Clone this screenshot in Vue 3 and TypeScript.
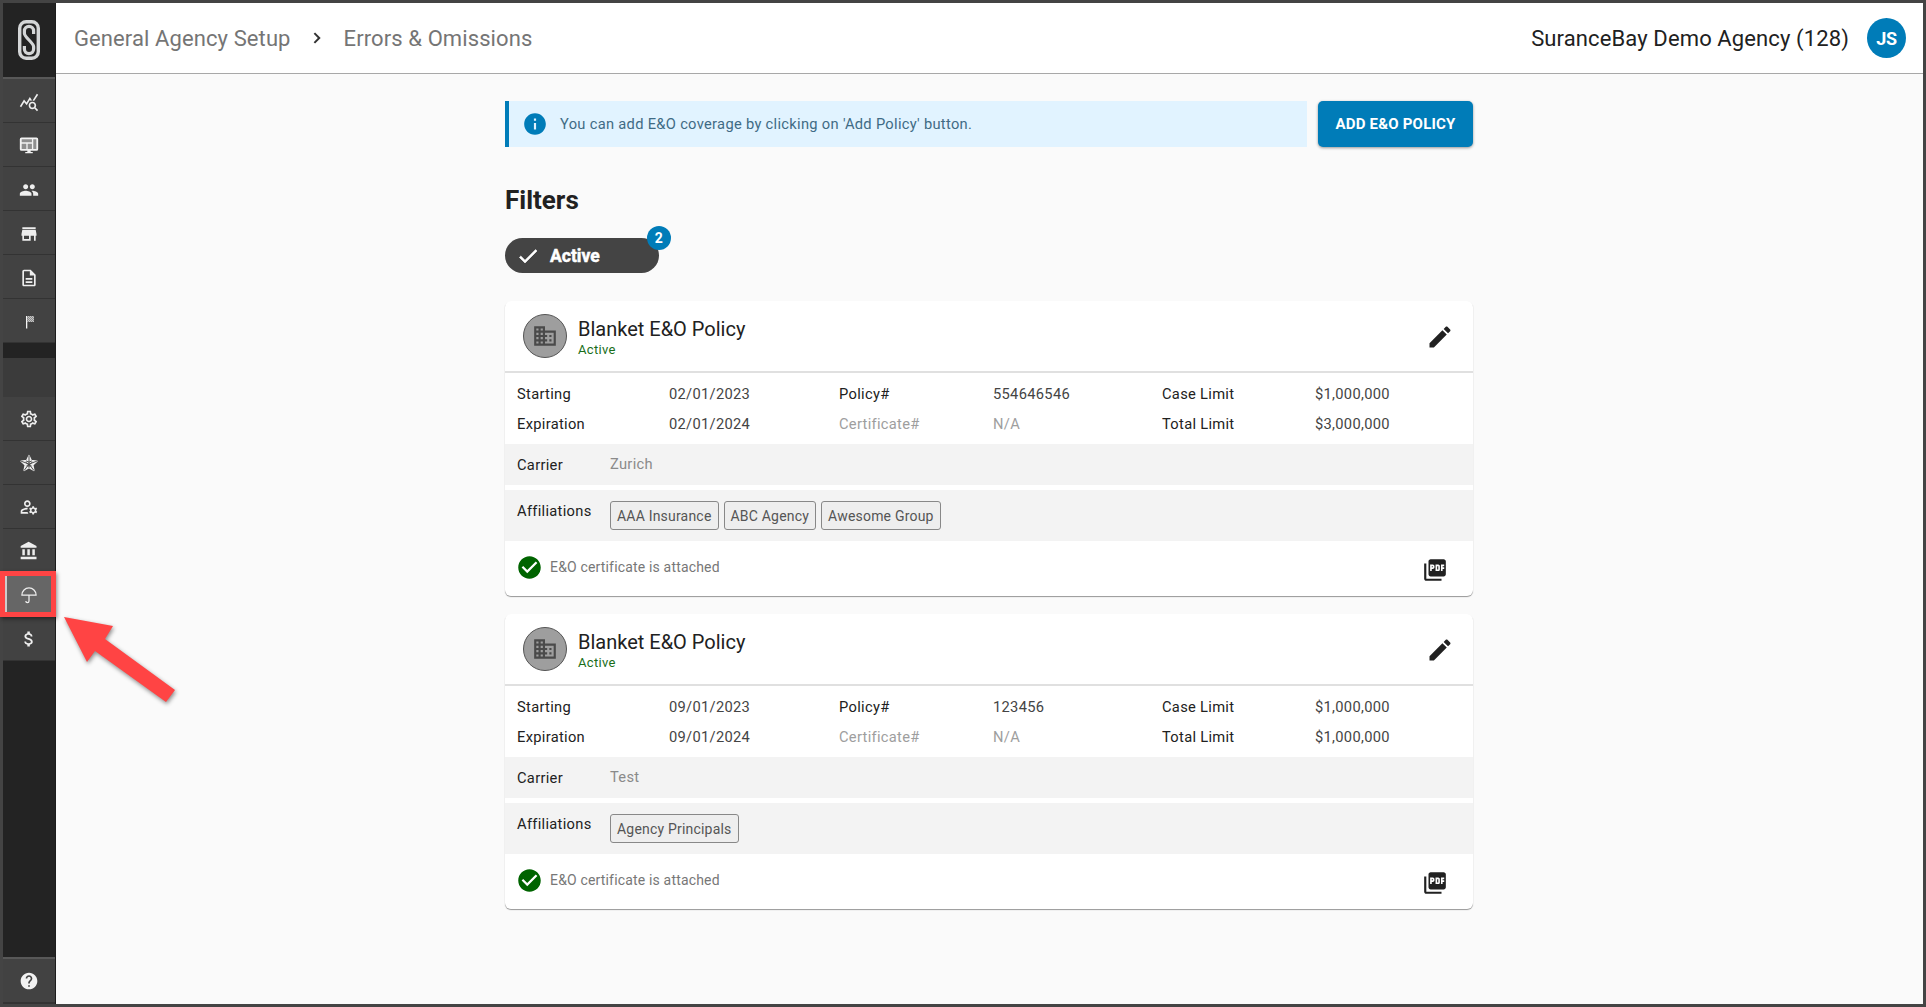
<template>
  <div class="frame">
    <aside class="sidebar">
      <div class="logo">
        <svg viewBox="0 0 22 40" width="22" height="40" fill="none" stroke="#d4d6d7">
          <rect x="1.700" y="1.700" width="18.600" height="36.600" rx="6.500" stroke-width="3.400" />
          <path stroke-width="3.200" d="M15.600 14V11a4.600 4.600 0 0 0-9.200 0v2.500c0 3.500 9.200 9.500 9.200 13V29a4.600 4.600 0 0 1-9.200 0v-3" />
        </svg>
      </div>
      <nav class="group">
        <a class="nav-item nudge">
          <svg viewBox="0 0 24 24" width="20" height="20" fill="#eee"><path :d="icons.stats" /></svg>
        </a>
        <a class="nav-item">
          <svg viewBox="0 0 24 24" width="20" height="20" fill="#f2f2f2">
            <rect x="2" y="4" width="20" height="14" fill="#8f8f8f" />
            <path :d="icons.monitor" />
          </svg>
        </a>
        <a class="nav-item nudge">
          <svg viewBox="0 0 24 24" width="20" height="20" fill="#eee"><path :d="icons.people" /></svg>
        </a>
        <a class="nav-item nudge">
          <svg viewBox="0 0 24 24" width="20" height="20" fill="#eee"><path :d="icons.store" /></svg>
        </a>
        <a class="nav-item nudge">
          <svg viewBox="0 0 24 24" width="20" height="20" fill="#eee"><path :d="icons.doc" /></svg>
        </a>
        <a class="nav-item">
          <svg viewBox="0 0 20 20" width="20" height="20">
            <defs>
              <pattern id="checker" width="2" height="2" patternUnits="userSpaceOnUse">
                <rect width="2" height="2" fill="#8a8a8a" />
                <rect width="1" height="1" fill="#c4c4c4" />
                <rect x="1" y="1" width="1" height="1" fill="#c4c4c4" />
              </pattern>
            </defs>
            <rect x="7" y="5" width="1.300" height="12.500" fill="#f5f5f5" />
            <rect x="8.300" y="5" width="6.700" height="6" fill="url(#checker)" />
          </svg>
        </a>
      </nav>
      <div class="gap"></div>
      <div class="blank"></div>
      <nav class="group">
        <a class="nav-item">
          <svg viewBox="0 0 24 24" width="20" height="20" fill="#eee"><path :d="icons.settings" /></svg>
        </a>
        <a class="nav-item">
          <svg viewBox="0 0 24 24" width="20" height="20" fill="#eee">
            <path d="M12 3l2.800 6 6.700.8-4.900 4.600 1.300 6.600-5.900-3.300L6.100 21l1.300-6.600L2.500 9.800 9.200 9z" stroke="#eee" stroke-width="1.600" stroke-linejoin="round" />
            <path d="M12 3v14.700M2.500 9.800l9.500 3.400 9.500-3.400M6.100 21l5.900-7.800 5.900 7.800M8 11l4 3.800 4-3.800M9 15.500h6M8.500 9.500l3.500 1.500 3.500-1.500" fill="none" stroke="#444" stroke-width="1.100" />
          </svg>
        </a>
        <a class="nav-item">
          <svg viewBox="0 0 24 24" width="20" height="20" fill="#eee"><path :d="icons.manage" /></svg>
        </a>
        <a class="nav-item">
          <svg viewBox="0 0 24 24" width="20" height="20" fill="#eee"><path :d="icons.bank" /></svg>
        </a>
        <a class="nav-item active">
          <svg viewBox="0 0 24 24" width="20" height="20" fill="none" stroke="#eee" stroke-width="1.500">
            <path d="M3.500 12a8.500 8.500 0 0 1 17 0z" />
            <path d="M12 12v7.200a1.900 1.900 0 0 1-3.800 0" />
          </svg>
        </a>
        <a class="nav-item">
          <svg viewBox="0 0 24 24" width="20" height="20" fill="#eee"><path :d="icons.money" /></svg>
        </a>
      </nav>
      <div class="spacer"></div>
      <a class="nav-item help">
        <svg viewBox="0 0 24 24" width="20" height="20" fill="#f2f2f2"><path :d="icons.help" /></svg>
      </a>
    </aside>

    <main class="main">
      <header class="topbar">
        <div class="crumbs">
          <span>General Agency Setup</span>
          <svg viewBox="0 0 24 24" width="20" height="20" fill="#333"><path d="M9.700 5.300 8 7l5 5-5 5 1.700 1.700 6.700-6.700z" /></svg>
          <span class="crumb-last">Errors &amp; Omissions</span>
        </div>
        <div class="agency">
          <span>SuranceBay Demo Agency (128)</span>
          <div class="avatar">JS</div>
        </div>
      </header>

      <section class="content">
        <div class="notice-row">
          <div class="notice">
            <svg viewBox="0 0 24 24" width="26" height="26" fill="#007cb8"><path :d="icons.info" /></svg>
            <span>You can add E&amp;O coverage by clicking on 'Add Policy' button.</span>
          </div>
          <button class="add-btn">ADD E&amp;O POLICY</button>
        </div>

        <h2 class="filters-title">Filters</h2>
        <div class="chip">
          <svg viewBox="0 0 24 24" width="24" height="24" fill="#fff" stroke="#fff" stroke-width=".6"><path :d="icons.check" /></svg>
          <span class="chip-text">Active</span>
          <b class="chip-badge">2</b>
        </div>

        <article v-for="(policy, i) in policies" :key="i" class="card">
          <div class="card-head">
            <div class="round">
              <svg viewBox="0 0 24 24" width="26" height="26" fill="#4a4a4a"><path :d="icons.domain" /></svg>
            </div>
            <div class="card-title">
              <div class="name">Blanket E&amp;O Policy</div>
              <div class="status">Active</div>
            </div>
            <svg class="edit" viewBox="0 0 24 24" width="28" height="28" fill="#212121"><path :d="icons.edit" /></svg>
          </div>

          <div class="details">
            <span class="lbl">Starting</span><span class="val">{{ policy.start }}</span>
            <span class="lbl">Policy#</span><span class="val">{{ policy.number }}</span>
            <span class="lbl">Case Limit</span><span class="val">{{ policy.caseLimit }}</span>
            <span class="lbl">Expiration</span><span class="val">{{ policy.end }}</span>
            <span class="muted">Certificate#</span><span class="muted">N/A</span>
            <span class="lbl">Total Limit</span><span class="val">{{ policy.totalLimit }}</span>
          </div>

          <div class="band carrier">
            <span class="lbl band-lbl">Carrier</span>
            <span class="carrier-name">{{ policy.carrier }}</span>
          </div>

          <div class="band affil">
            <span class="lbl band-lbl affil-lbl">Affiliations</span>
            <div class="tags">
              <span v-for="t in policy.affiliations" :key="t" class="tag">{{ t }}</span>
            </div>
          </div>

          <div class="attach">
            <svg viewBox="0 0 24 24" width="27" height="27" fill="#006400"><path :d="icons.checkCircle" /></svg>
            <span>E&amp;O certificate is attached</span>
            <svg class="pdf" viewBox="0 0 24 24" width="26" height="26" fill="#212121"><path :d="icons.pdf" /></svg>
          </div>
        </article>
      </section>
    </main>

    <!-- screenshot annotation -->
    <div class="callout"></div>
    <svg class="arrow" viewBox="0 0 130 100" width="130" height="100">
      <polygon points="4,7 53,16 45,29 115,80 106,92 35,41 27,52" fill="#ff4444" />
    </svg>
  </div>
</template>

<script setup lang="ts">
const icons = {
  stats: 'M19.88 18.47c.44-.7.7-1.51.7-2.39 0-2.49-2.01-4.5-4.5-4.5s-4.5 2.01-4.5 4.5 2.01 4.5 4.49 4.5c.88 0 1.7-.26 2.39-.7L21.58 23 23 21.58l-3.12-3.11zm-3.8.11c-1.38 0-2.5-1.12-2.5-2.5s1.12-2.5 2.5-2.5 2.5 1.12 2.5 2.5-1.12 2.5-2.5 2.5zm-.36-8.5c-.74.02-1.45.18-2.1.45l-.55-.83-3.8 6.18-3.01-3.52-3.63 5.81L1 17l5-8 3 3.5L13 6l2.72 4.080zm2.59.5c-.64-.28-1.33-.45-2.05-.49L21.38 2 23 3.180l-4.69 7.400z',
  monitor: 'M21 3H3a2 2 0 0 0-2 2v12a2 2 0 0 0 2 2h7v1.500H7.500V22h9v-1.500H14V19h7a2 2 0 0 0 2-2V5a2 2 0 0 0-2-2zM3.200 5.200h12.300v3.600H3.200zm0 5.200h5.600v6.300H3.200zm7.200 0h5.100v6.300h-5.100zm6.700-5.200h3.700v11.500h-3.700z',
  people: 'M16 11c1.660 0 2.990-1.340 2.990-3S17.660 5 16 5c-1.660 0-3 1.340-3 3s1.340 3 3 3zm-8 0c1.660 0 2.990-1.340 2.990-3S9.660 5 8 5C6.340 5 5 6.340 5 8s1.340 3 3 3zm0 2c-2.330 0-7 1.170-7 3.500V19h14v-2.500c0-2.330-4.670-3.500-7-3.500zm8 0c-.29 0-.62.02-.97.05 1.160.84 1.970 1.970 1.970 3.450V19h6v-2.500c0-2.330-4.670-3.500-7-3.500z',
  store: 'M20 4H4v2h16V4zm1 10v-2l-1-5H4l-1 5v2h1v6h10v-6h4v6h2v-6h1zm-9 4H6v-4h6v4z',
  doc: 'M8 16h8v2H8zm0-4h8v2H8zm6-10H6c-1.100 0-2 .9-2 2v16c0 1.100.89 2 1.990 2H18c1.100 0 2-.9 2-2V8l-6-6zm4 18H6V4h7v5h5v11z',
  settings: 'M19.430 12.980c.04-.32.07-.64.07-.98 0-.34-.03-.66-.07-.98l2.110-1.650c.19-.15.24-.42.12-.64l-2-3.460c-.09-.16-.26-.25-.44-.25-.06 0-.12.01-.17.03l-2.490 1c-.52-.4-1.080-.73-1.690-.98l-.38-2.650C14.460 2.180 14.250 2 14 2h-4c-.25 0-.46.18-.49.42l-.38 2.650c-.61.25-1.170.59-1.690.98l-2.490-1c-.06-.02-.12-.03-.18-.03-.17 0-.34.09-.43.25l-2 3.460c-.13.22-.07.49.12.64l2.110 1.650c-.04.32-.07.65-.07.98 0 .33.03.66.07.98l-2.110 1.650c-.19.15-.24.42-.12.64l2 3.460c.09.16.26.25.44.25.06 0 .12-.01.17-.03l2.490-1c.52.4 1.080.73 1.690.98l.38 2.650c.03.24.24.42.49.42h4c.25 0 .46-.18.49-.42l.38-2.650c.61-.25 1.170-.59 1.690-.98l2.490 1c.06.02.12.03.18.03.17 0 .34-.09.43-.25l2-3.460c.12-.22.07-.49-.12-.64l-2.110-1.650zm-1.980-1.710c.04.31.05.52.05.73 0 .21-.02.43-.05.73l-.14 1.130.89.7 1.080.84-.7 1.210-1.270-.51-1.040-.42-.9.68c-.43.32-.84.56-1.250.73l-1.060.43-.16 1.130-.2 1.350h-1.400l-.19-1.350-.16-1.130-1.060-.43c-.43-.18-.83-.41-1.230-.71l-.91-.7-1.060.43-1.270.51-.7-1.210 1.080-.84.89-.7-.14-1.130c-.03-.31-.05-.54-.05-.74s.02-.43.05-.73l.14-1.130-.89-.7-1.080-.84.7-1.210 1.270.51 1.040.42.9-.68c.43-.32.84-.56 1.250-.73l1.060-.43.16-1.130.2-1.350h1.390l.19 1.350.16 1.130 1.060.43c.43.18.83.41 1.230.71l.91.7 1.060-.43 1.270-.51.7 1.210-1.070.85-.89.7.14 1.130zM12 8c-2.210 0-4 1.790-4 4s1.790 4 4 4 4-1.790 4-4-1.790-4-4-4zm0 6c-1.100 0-2-.9-2-2s.9-2 2-2 2 .9 2 2-.9 2-2 2z',
  manage: 'M4 18v-.65c0-.34.16-.66.41-.81C6.100 15.530 8.030 15 10 15c.03 0 .05 0 .08.01.1-.7.3-1.370.59-1.980-.22-.02-.44-.03-.67-.03-2.420 0-4.680.67-6.610 1.820-.88.52-1.390 1.500-1.390 2.530V20h9.260c-.42-.6-.75-1.280-.97-2H4zM10 12c2.210 0 4-1.790 4-4s-1.790-4-4-4-4 1.790-4 4 1.790 4 4 4zm0-6c1.100 0 2 .9 2 2s-.9 2-2 2-2-.9-2-2 .9-2 2-2zM20.750 16c0-.22-.03-.42-.06-.63l1.140-1.010-1-1.730-1.450.49c-.32-.27-.68-.48-1.080-.63L18 11h-2l-.3 1.490c-.4.15-.76.36-1.080.63l-1.450-.49-1 1.730 1.140 1.010c-.03.21-.06.41-.06.63s.03.42.06.63l-1.140 1.010 1 1.730 1.450-.49c.32.27.68.48 1.080.63L16 21h2l.3-1.490c.4-.15.76-.36 1.080-.63l1.450.49 1-1.730-1.140-1.010c.03-.21.06-.41.06-.63zM17 18c-1.100 0-2-.9-2-2s.9-2 2-2 2 .9 2 2-.9 2-2 2z',
  bank: 'M4 10v7h3v-7H4zm6 0v7h3v-7h-3zM2 22h19v-3H2v3zm14-12v7h3v-7h-3zm-4.500-9L2 6v2h19V6l-9.500-5z',
  money: 'M11.800 10.900c-2.270-.59-3-1.200-3-2.150 0-1.090 1.010-1.850 2.700-1.850 1.780 0 2.440.85 2.500 2.100h2.210c-.07-1.720-1.120-3.300-3.210-3.810V3h-3v2.160c-1.940.42-3.500 1.680-3.500 3.610 0 2.310 1.910 3.460 4.700 4.130 2.500.6 3 1.480 3 2.410 0 .69-.49 1.790-2.700 1.790-2.060 0-2.870-.92-2.980-2.100h-2.200c.12 2.190 1.760 3.420 3.680 3.830V21h3v-2.150c1.950-.37 3.500-1.500 3.500-3.550 0-2.840-2.430-3.810-4.700-4.400z',
  help: 'M12 2C6.480 2 2 6.480 2 12s4.480 10 10 10 10-4.480 10-10S17.520 2 12 2zm1 17h-2v-2h2v2zm2.070-7.750l-.9.92C13.450 12.900 13 13.500 13 15h-2v-.5c0-1.100.45-2.100 1.170-2.830l1.240-1.260c.37-.36.59-.86.59-1.410 0-1.100-.9-2-2-2s-2 .9-2 2H8c0-2.210 1.790-4 4-4s4 1.790 4 4c0 .88-.36 1.680-.93 2.250z',
  info: 'M12 2C6.480 2 2 6.480 2 12s4.480 10 10 10 10-4.480 10-10S17.520 2 12 2zm1 15h-2v-6h2v6zm0-8h-2V7h2v2z',
  check: 'M9 16.170L4.830 12l-1.420 1.410L9 19 21 7l-1.410-1.410z',
  domain: 'M12 7V3H2v18h20V7H12zM6 19H4v-2h2v2zm0-4H4v-2h2v2zm0-4H4V9h2v2zm0-4H4V5h2v2zm4 12H8v-2h2v2zm0-4H8v-2h2v2zm0-4H8V9h2v2zm0-4H8V5h2v2zm10 12h-8v-2h2v-2h-2v-2h2v-2h-2V9h8v10zm-2-8h-2v2h2v-2zm0 4h-2v2h2v-2z',
  edit: 'M3 17.250V21h3.750L17.810 9.940l-3.750-3.750L3 17.250zM20.710 7.040c.39-.39.39-1.020 0-1.410l-2.340-2.340c-.39-.39-1.020-.39-1.410 0l-1.830 1.830 3.750 3.750 1.830-1.830z',
  checkCircle: 'M12 2C6.480 2 2 6.480 2 12s4.480 10 10 10 10-4.480 10-10S17.520 2 12 2zm-2 15l-5-5 1.410-1.410L10 14.170l7.590-7.590L19 8l-9 9z',
  pdf: 'M20 2H8c-1.100 0-2 .9-2 2v12c0 1.100.9 2 2 2h12c1.100 0 2-.9 2-2V4c0-1.100-.9-2-2-2zm-8.500 7.500c0 .83-.67 1.500-1.500 1.500H9v2H7.500V7H10c.83 0 1.500.67 1.500 1.500v1zm5 2c0 .83-.67 1.500-1.500 1.500h-2.500V7H15c.83 0 1.500.67 1.500 1.500v3zm4-3H19v1h1.500V11H19v2h-1.500V7h3v1.500zM9 9.500h1v-1H9v1zM4 6H2v14c0 1.100.9 2 2 2h14v-2H4V6zm10 5.500h1v-3h-1v3z'
}

interface Policy {
  start: string
  end: string
  number: string
  caseLimit: string
  totalLimit: string
  carrier: string
  affiliations: string[]
}

const policies: Policy[] = [
  {
    start: '02/01/2023',
    end: '02/01/2024',
    number: '554646546',
    caseLimit: '$1,000,000',
    totalLimit: '$3,000,000',
    carrier: 'Zurich',
    affiliations: ['AAA Insurance', 'ABC Agency', 'Awesome Group']
  },
  {
    start: '09/01/2023',
    end: '09/01/2024',
    number: '123456',
    caseLimit: '$1,000,000',
    totalLimit: '$1,000,000',
    carrier: 'Test',
    affiliations: ['Agency Principals']
  }
]
</script>

<style>
html,
body {
  margin: 0;
  background: #444;
}
</style>

<style scoped>
.frame {
  position: relative;
  width: 1926px;
  height: 1007px;
  box-sizing: border-box;
  padding: 3px;
  background: #444;
  display: flex;
  overflow: hidden;
  font-family: Roboto, "Liberation Sans", sans-serif;
  letter-spacing: 0.3px;
}
.sidebar {
  width: 53px;
  flex: none;
  display: flex;
  flex-direction: column;
  background: #232323;
  border-right: 1px solid #1c1c1c;
  box-sizing: border-box;
}
.logo {
  height: 74px;
  flex: none;
  display: flex;
  align-items: center;
  justify-content: center;
  padding-right: 1px;
  box-sizing: border-box;
}
.group {
  border-top: 2px solid #585858;
  display: flex;
  flex-direction: column;
}
.gap {
  height: 15px;
  flex: none;
}
.blank {
  height: 39px;
  flex: none;
  background: #3b3b3b;
}
.blank + .group {
  border-top: 0;
}
.nav-item {
  height: 44px;
  flex: none;
  box-sizing: border-box;
  background: #424242;
  border-bottom: 1px solid #333;
  display: flex;
  align-items: center;
  justify-content: center;
}
.nudge {
  padding-top: 2px;
}
.nav-item.active {
  background: #666;
}
.spacer {
  flex: 1;
}
.help {
  height: 47px;
  border-top: 2px solid #585858;
  border-bottom: 2px solid #333;
}
.main {
  flex: 1;
  min-width: 0;
  background: #fafafa;
  display: flex;
  flex-direction: column;
}
.topbar {
  height: 71px;
  flex: none;
  box-sizing: border-box;
  background: #fff;
  border-bottom: 1px solid #a8a8a8;
  padding: 0 17px 0 18px;
  display: flex;
  align-items: center;
  justify-content: space-between;
}
.crumbs {
  display: flex;
  align-items: center;
  gap: 16px;
  font-size: 22px;
  color: #757575;
  letter-spacing: 0.1px;
}
.crumb-last {
  margin-left: 1px;
}
.agency {
  display: flex;
  align-items: center;
  gap: 18px;
  font-size: 22px;
  color: #212121;
  letter-spacing: 0.12px;
}
.avatar {
  width: 39px;
  height: 40px;
  border-radius: 50%;
  background: #007cb8;
  color: #fff;
  font-size: 18px;
  font-weight: 700;
  letter-spacing: -0.3px;
  display: flex;
  align-items: center;
  justify-content: center;
}
.content {
  width: 968px;
  margin-left: 449px;
  padding-top: 27px;
}
.notice-row {
  display: flex;
  gap: 11px;
  height: 46px;
}
.notice {
  flex: 1;
  background: #e1f3ff;
  border-left: 4px solid #007cb8;
  display: flex;
  align-items: center;
  gap: 12px;
  padding-left: 13px;
  font-size: 14.7px;
  color: #3f6b85;
}
.add-btn {
  width: 155px;
  border: 0;
  border-radius: 5px;
  background: #007cb8;
  color: #fff;
  font: 700 15px Roboto, sans-serif;
  letter-spacing: 0.2px;
  box-shadow: 0 1px 3px rgba(0, 0, 0, 0.4);
  padding: 0;
}
.filters-title {
  margin: 36px 0 0;
  height: 34px;
  line-height: 34px;
  font-size: 26px;
  font-weight: 700;
  letter-spacing: 0;
  color: #212121;
}
.chip {
  position: relative;
  width: 154px;
  height: 35px;
  margin-top: 21px;
  margin-bottom: 28px;
  border-radius: 18px;
  background: #444;
  color: #fff;
  display: flex;
  align-items: center;
  gap: 10px;
  padding-left: 11px;
  box-sizing: border-box;
}
.chip-text {
  font-size: 17.500px;
  font-weight: 700;
  letter-spacing: 0;
  -webkit-text-stroke: 0.5px #fff;
}
.chip-badge {
  position: absolute;
  right: -12px;
  top: -12px;
  width: 24px;
  height: 24px;
  border-radius: 50%;
  background: #007cb8;
  font-size: 14px;
  display: flex;
  align-items: center;
  justify-content: center;
}
.card {
  background: #fff;
  border-radius: 6px;
  margin-bottom: 18px;
  box-shadow: 0 1px 1px rgba(0, 0, 0, 0.4);
  overflow: hidden;
}
.card-head {
  height: 72px;
  box-sizing: border-box;
  border-bottom: 2px solid #e0e0e0;
  display: flex;
  align-items: center;
  padding: 0 19px 0 18px;
}
.round {
  width: 44px;
  height: 44px;
  box-sizing: border-box;
  border-radius: 50%;
  background: #9e9e9e;
  border: 1.5px solid #555;
  display: flex;
  align-items: center;
  justify-content: center;
}
.card-title {
  margin-left: 11px;
  flex: 1;
  padding-top: 3px;
}
.name {
  font-size: 20px;
  line-height: 24px;
  color: #212121;
  letter-spacing: 0;
}
.status {
  font-size: 13px;
  line-height: 16px;
  margin-top: 1px;
  color: #1a6e1a;
}
.edit {
  margin-top: 2px;
}
.details {
  display: grid;
  grid-template-columns: 152px 170px 154px 169px 153px 1fr;
  grid-auto-rows: 30px;
  align-items: center;
  padding: 6px 0 5px 12px;
  font-size: 14.7px;
}
.lbl {
  color: #212121;
  font-size: 14.7px;
}
.val {
  color: #444;
}
.muted {
  color: #9e9e9e;
}
.band {
  background: #f3f3f3;
  display: flex;
  padding-left: 12px;
  font-size: 14.7px;
}
.band-lbl {
  width: 93px;
  flex: none;
}
.carrier {
  height: 41px;
  align-items: center;
  margin-bottom: 5px;
}
.carrier-name {
  color: #8a8a8a;
  margin-top: -2px;
}
.affil {
  height: 51px;
  padding-top: 11px;
  box-sizing: border-box;
}
.affil-lbl {
  line-height: 20px;
}
.tags {
  display: flex;
  gap: 5px;
}
.tag {
  height: 29px;
  box-sizing: border-box;
  border: 1px solid #888;
  border-radius: 3px;
  background: #eee;
  color: #555;
  padding: 0 6px;
  line-height: 28px;
  font-size: 14px;
  letter-spacing: 0.2px;
}
.attach {
  height: 55px;
  box-sizing: border-box;
  display: flex;
  align-items: center;
  padding: 0 25px 3px 11px;
  font-size: 14px;
  letter-spacing: 0.17px;
  color: #777;
  gap: 7px;
}
.pdf {
  margin-left: auto;
  margin-top: 6px;
}
.callout {
  position: absolute;
  left: 0;
  top: 571px;
  width: 56px;
  height: 46px;
  box-sizing: border-box;
  border: 5px solid #ff4444;
  box-shadow: 1px 2px 4px rgba(0, 0, 0, 0.45), inset 2px 0 0 #ccc;
}
.arrow {
  position: absolute;
  left: 60px;
  top: 610px;
  filter: drop-shadow(1px 2px 2px rgba(0, 0, 0, 0.45));
}
</style>
